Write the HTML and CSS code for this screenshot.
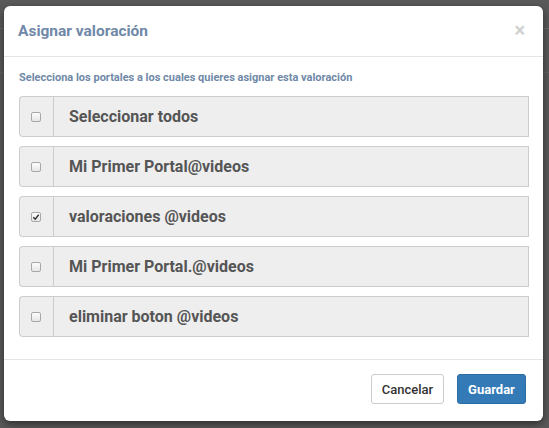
FILE: index.html
```html
<!DOCTYPE html>
<html lang="es">
<head>
<meta charset="utf-8">
<title>Asignar valoración</title>
<link rel="stylesheet" href="styles.css">
</head>
<body>
<div class="modal">
  <div class="modal-header">
    <h4 class="modal-title">Asignar valoración</h4>
    <span class="close">×</span>
  </div>
  <div class="modal-body">
    <p class="lead-label">Selecciona los portales a los cuales quieres asignar esta valoración</p>
    <div class="input-group">
      <span class="addon"><span class="check"></span></span>
      <span class="field">Seleccionar todos</span>
    </div>
    <div class="input-group">
      <span class="addon"><span class="check"></span></span>
      <span class="field">Mi Primer Portal@videos</span>
    </div>
    <div class="input-group">
      <span class="addon"><span class="check checked"><svg viewBox="0 0 10 10" width="8" height="8"><path d="M1.6 5.2 L4 7.6 L8.4 2.2" fill="none" stroke="#333" stroke-width="1.8"/></svg></span></span>
      <span class="field">valoraciones @videos</span>
    </div>
    <div class="input-group">
      <span class="addon"><span class="check"></span></span>
      <span class="field">Mi Primer Portal.@videos</span>
    </div>
    <div class="input-group">
      <span class="addon"><span class="check"></span></span>
      <span class="field">eliminar boton @videos</span>
    </div>
  </div>
  <div class="modal-footer">
    <button class="btn btn-default">Cancelar</button>
    <button class="btn btn-primary">Guardar</button>
  </div>
</div>
</body>
</html>
```
FILE: styles.css
```css
* { box-sizing: border-box; }
html, body { height: 100%; }
body {
  margin: 0;
  font-family: Roboto, "Liberation Sans", Arial, sans-serif;
  background-color: #5a5a5a;
  background-image:
    linear-gradient(to bottom, transparent 28px, #6a6a6a 28px, #6a6a6a 29px, transparent 29px),
    linear-gradient(to bottom, transparent 72px, #626262 72px, #626262 73px, transparent 73px);
  padding: 6px 6px 0 4px;
  overflow: hidden;
}
.modal {
  width: 539px;
  height: 415px;
  background: #fff;
  border-radius: 6px;
  box-shadow: 0 3px 9px rgba(0,0,0,.5);
  display: flex;
  flex-direction: column;
}
.modal-header {
  display: flex;
  justify-content: space-between;
  align-items: flex-start;
  padding: 15px 15px 15px 14px;
  border-bottom: 1px solid #e5e5e5;
  height: 51px;
}
.modal-title {
  margin: 0;
  font-size: 15.5px;
  line-height: 20px;
  font-weight: 700;
  color: #7089a8;
}
.close {
  font-size: 20px;
  line-height: 16px;
  font-weight: 700;
  color: #cfcfcf;
  margin-top: 1px;
  margin-right: 3px;
}
.modal-body {
  padding: 14px 14px 0 15px;
  flex: 1;
}
.lead-label {
  margin: 0 0 11px;
  font-size: 11px;
  line-height: 14px;
  font-weight: 700;
  color: #7089a8;
}
.input-group {
  display: flex;
  height: 41px;
  margin-bottom: 9px;
}
.addon {
  width: 34px;
  background: #eee;
  border: 1px solid #ccc;
  border-right: 0;
  border-radius: 4px 0 0 4px;
  display: flex;
  align-items: center;
  justify-content: center;
}
.check {
  width: 10px;
  height: 10px;
  border: 1px solid #a8a8a8;
  border-radius: 2px;
  background: linear-gradient(#fdfdfd, #e6e6e6);
  display: flex;
  align-items: center;
  justify-content: center;
  margin-right: 1px;
}
.field {
  flex: 1;
  background: #eee;
  border: 1px solid #ccc;
  display: flex;
  align-items: center;
  padding-left: 15px;
  font-size: 16px;
  font-weight: 700;
  color: #555;
}
.modal-footer {
  border-top: 1px solid #e5e5e5;
  padding: 14px 17px 0 15px;
  height: 62px;
  display: flex;
  justify-content: flex-end;
  gap: 13px;
}
.btn {
  height: 30px;
  padding: 0;
  border-radius: 3px;
  font-family: Roboto, "Liberation Sans", Arial, sans-serif;
  font-size: 13px;
  font-weight: 500;
  border: 1px solid transparent;
}
.btn-default {
  background: #fff;
  border-color: #ccc;
  color: #333;
  width: 73px;
}
.btn-primary {
  background: #337ab7;
  border-color: #2e6da4;
  color: #fff;
  font-weight: 700;
  width: 69px;
}
```
